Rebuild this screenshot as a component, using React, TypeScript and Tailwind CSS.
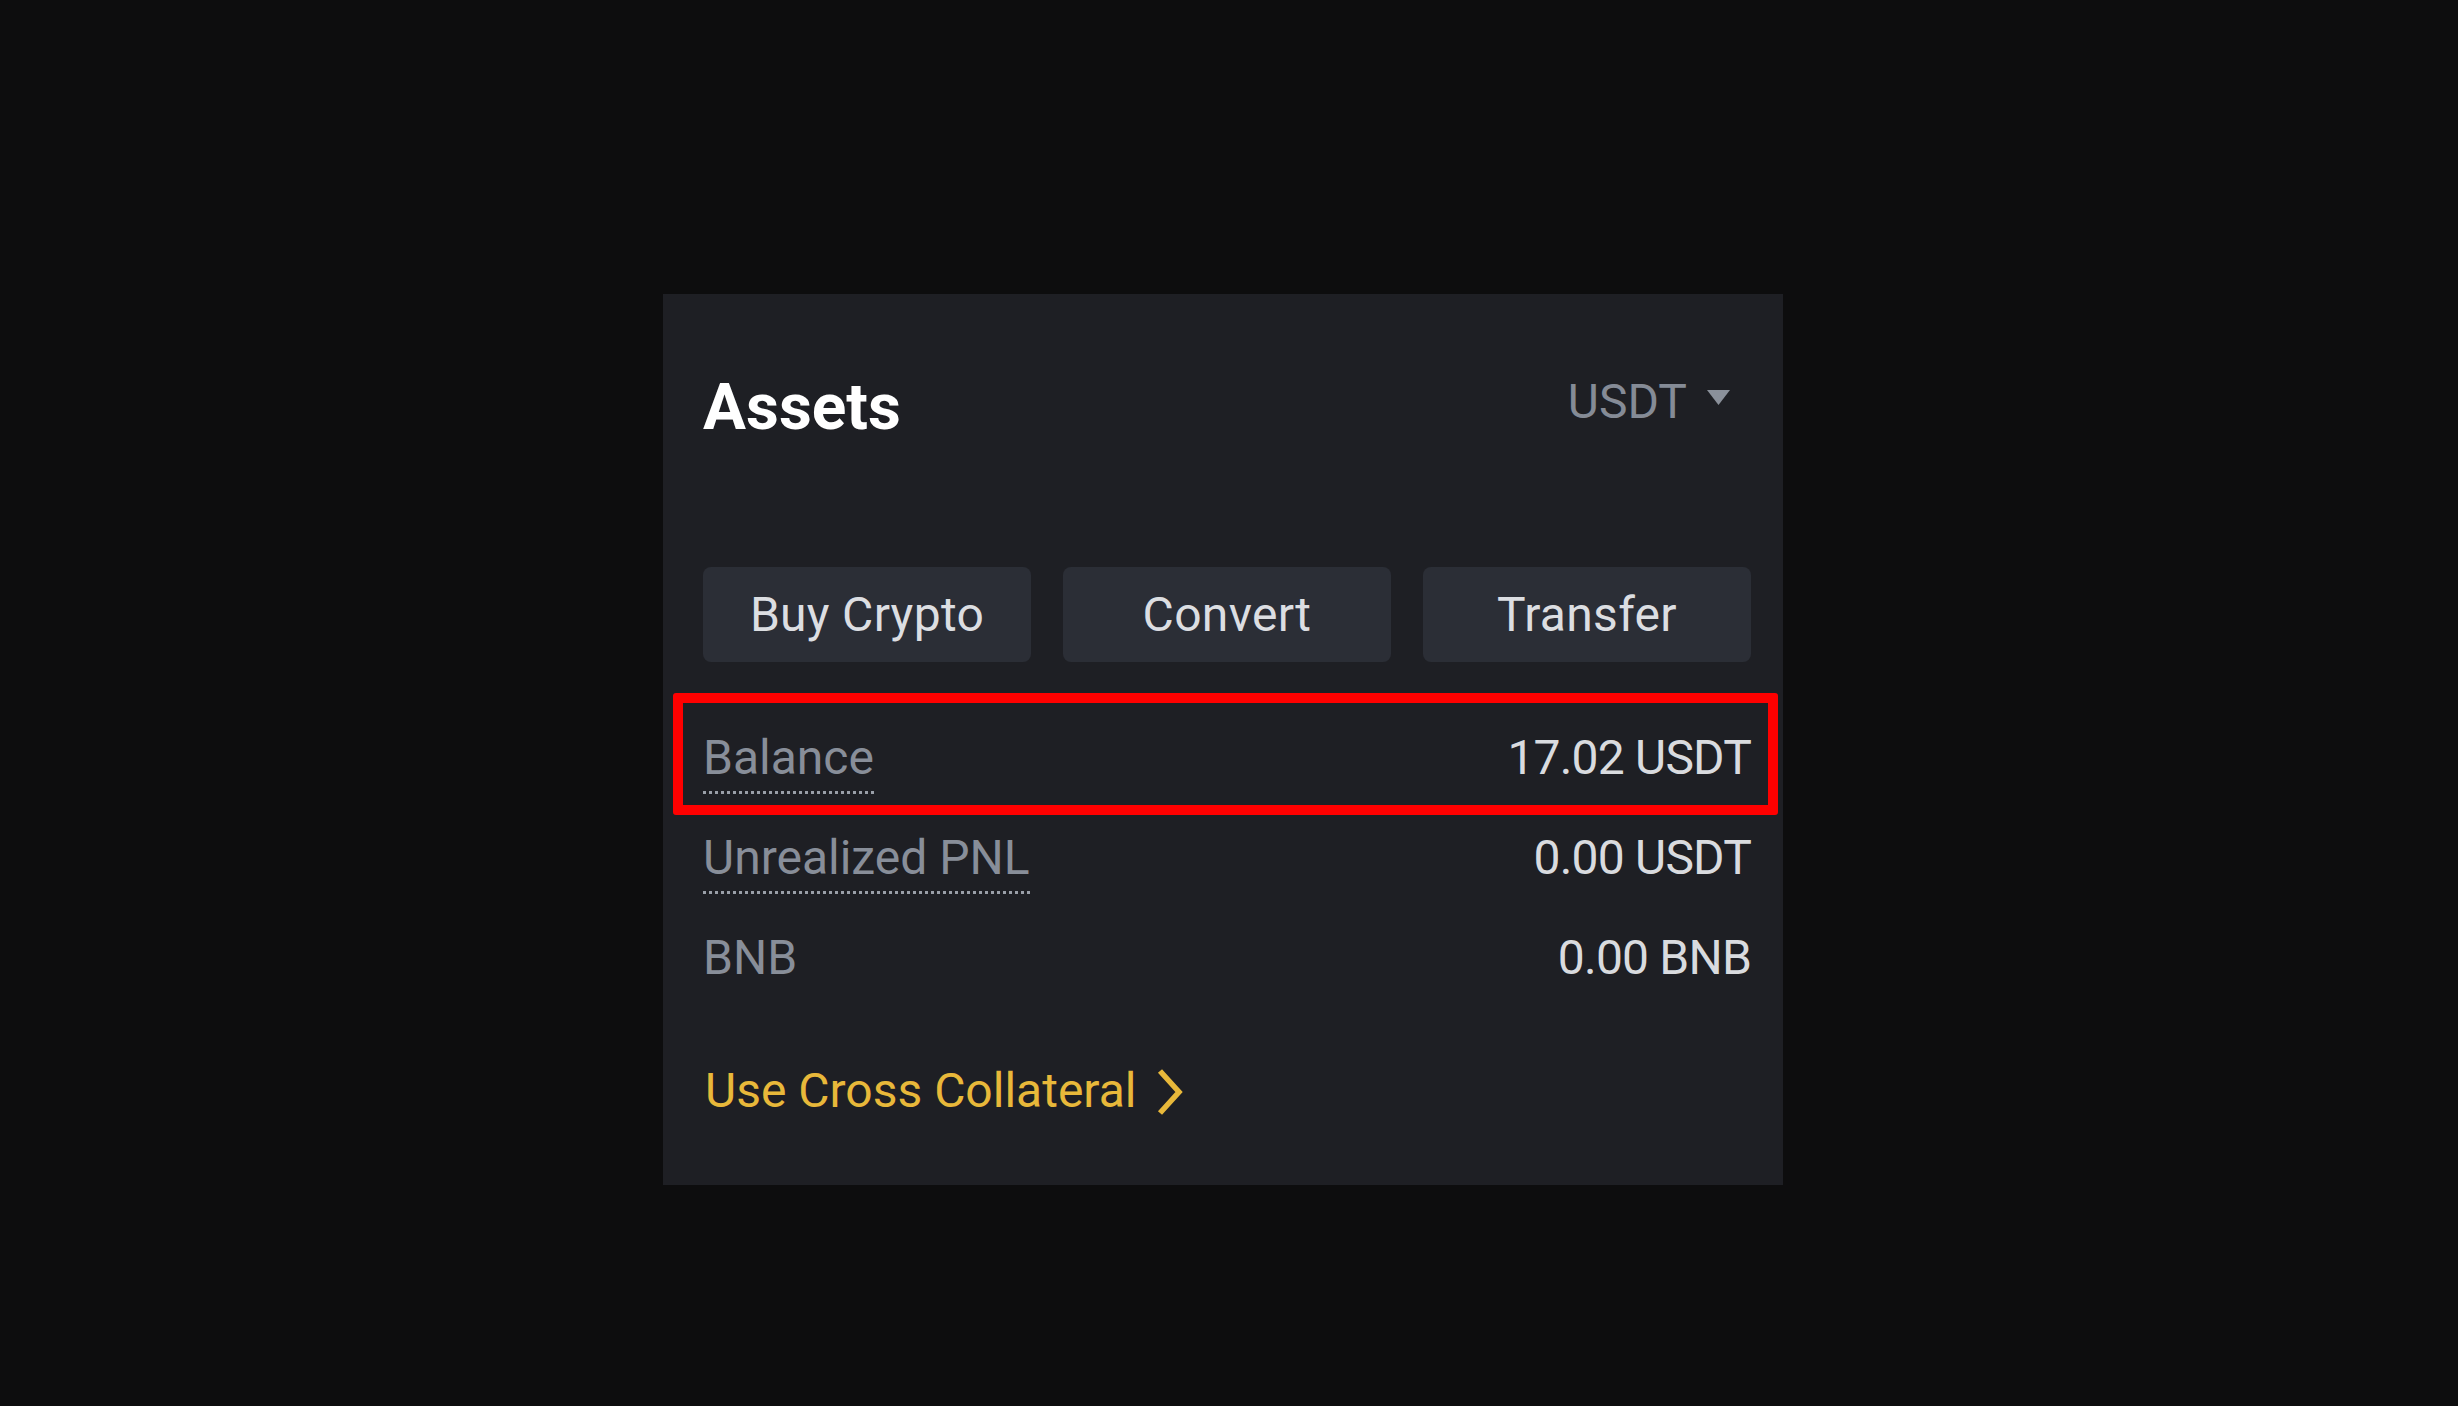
import React from "react";

const rows = [
  { label: "Balance", value: "17.02 USDT", dotted: true, highlight: true },
  { label: "Unrealized PNL", value: "0.00 USDT", dotted: true, highlight: false },
  { label: "BNB", value: "0.00 BNB", dotted: false, highlight: false },
];

export default function App() {
  return (
    <div
      className="w-[2458px] h-[1406px] bg-[#0d0d0e] flex items-start pt-[294px] pl-[663px]"
      style={{ fontFamily: "Roboto, 'Liberation Sans', sans-serif" }}
    >
      <div className="w-[1120px] h-[891px] bg-[#1e1f24] pl-[40px] pr-[32px] pt-[82px] flex flex-col">
        {/* Header */}
        <div className="flex items-start justify-between h-[64px]">
          <h1 className="text-[64px] leading-[64px] font-bold text-white">Assets</h1>
          <div className="flex items-center mt-[2px] mr-[21px] text-[#858b96]">
            <span className="text-[48px] leading-[48px]">USDT</span>
            <svg width="23" height="15" viewBox="0 0 23 15" className="ml-[20px] mt-[-10px]">
              <path d="M0 0 H23 L11.5 15 Z" fill="#8a909a" />
            </svg>
          </div>
        </div>

        {/* Buttons */}
        <div className="grid grid-cols-3 gap-[32px] mt-[127px]">
          {["Buy Crypto", "Convert", "Transfer"].map((b) => (
            <button
              key={b}
              className="h-[95px] rounded-[8px] bg-[#2b2e36] text-[#dcdee2] text-[48px] leading-[48px] tracking-[0.3px] flex items-center justify-center"
            >
              {b}
            </button>
          ))}
        </div>

        {/* Rows */}
        <div className="flex flex-col mt-[72px]">
          {rows.map((r) => (
            <div key={r.label} className="relative h-[100px] flex items-start justify-between">
              {r.highlight && (
                <div className="absolute left-[-30px] right-[-27px] top-[-41px] h-[122px] border-[10px] border-[#ff0000] rounded-[3px] pointer-events-none" />
              )}
              <span
                className={
                  r.dotted
                    ? "text-[48px] leading-[48px] text-[#888e99] pb-[9px] border-b-[3px] border-dotted border-[#9a9fa8]"
                    : "text-[48px] leading-[48px] text-[#888e99]"
                }
              >
                {r.label}
              </span>
              <span className="text-[48px] leading-[48px] tracking-[-0.8px] text-[#d9dbdf]">{r.value}</span>
            </div>
          ))}
        </div>

        {/* Link */}
        <div className="flex items-center mt-[32px] text-[#e8b83a]">
          <span className="text-[48px] leading-[48px] ml-[2px]">Use Cross Collateral</span>
          <svg width="28" height="48" viewBox="0 0 28 48" className="ml-[20px] mt-[2px]">
            <path d="M4 3 L23 24 L4 45" fill="none" stroke="#e8b83a" strokeWidth="5.5" strokeLinejoin="miter" />
          </svg>
        </div>
      </div>
    </div>
  );
}
